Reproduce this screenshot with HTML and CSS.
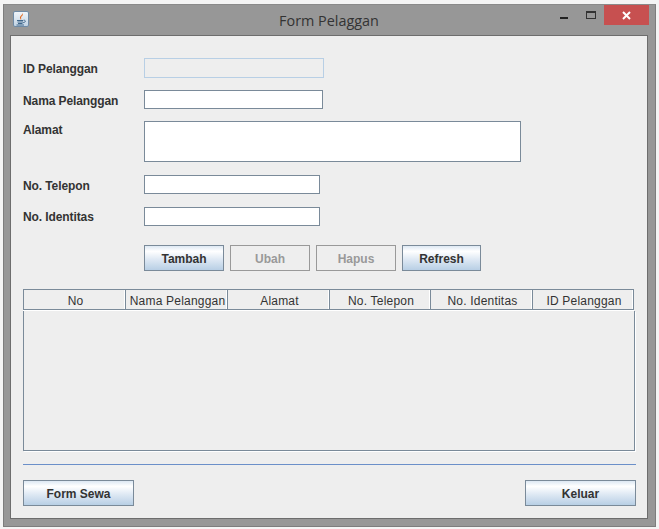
FILE: index.html
```html
<!DOCTYPE html>
<html lang="id">
<head>
  <meta charset="UTF-8" />
  <meta name="viewport" content="width=device-width, initial-scale=1" />
  <title>Form Pelaggan</title>
  <link rel="stylesheet" href="styles.css">
</head>
<body>
  <div class="window">
    <div class="titlebar">
      <svg class="app-icon" width="16" height="16" viewBox="0 0 16 16">
        <defs>
          <linearGradient id="iconBg" x1="0" y1="0" x2="0" y2="1">
            <stop offset="0" stop-color="#f2f6fa"/>
            <stop offset="1" stop-color="#bfd2e4"/>
          </linearGradient>
        </defs>
        <rect x="0.5" y="0.5" width="15" height="15" rx="1.5" fill="url(#iconBg)" stroke="#6f8aa5"/>
        <path d="M9 2C10 4 6.5 5 7 7C7.2 7.8 7.8 8.3 8 9C8.6 8 7.8 7 8.2 6C8.6 5 11 4.5 9 2Z" fill="#e2661a"/>
        <path d="M4 9.5H10M4.5 11H10M5 12.5H9.5M3.5 14H11" stroke="#41688c" stroke-width="1"/>
        <path d="M10.5 9.2C13 9 13 11.4 10.2 11.6" fill="none" stroke="#41688c" stroke-width="1"/>
      </svg>
      <div class="title">Form Pelaggan</div>
      <div class="controls">
        <span class="ctl-min"></span>
        <span class="ctl-max"></span>
        <span class="ctl-close">
          <svg width="9" height="9" viewBox="0 0 9 9"><path d="M1 1L8 8M8 1L1 8" stroke="#fff" stroke-width="2"/></svg>
        </span>
      </div>
    </div>

    <div class="content">
      <form class="fields">
        <div class="row row-id">
          <label>ID Pelanggan</label>
          <input class="input input-id" type="text" disabled />
        </div>
        <div class="row row-nama">
          <label>Nama Pelanggan</label>
          <input class="input input-nama" type="text" />
        </div>
        <div class="row row-alamat">
          <label>Alamat</label>
          <div class="input input-alamat"></div>
        </div>
        <div class="row row-telp">
          <label>No. Telepon</label>
          <input class="input input-short" type="text" />
        </div>
        <div class="row row-ident">
          <label>No. Identitas</label>
          <input class="input input-short" type="text" />
        </div>
      </form>

      <div class="actions">
        <button class="btn btn-80" type="button">Tambah</button>
        <button class="btn btn-80" type="button" disabled>Ubah</button>
        <button class="btn btn-80" type="button" disabled>Hapus</button>
        <button class="btn btn-79" type="button">Refresh</button>
      </div>

      <div class="table">
        <div class="thead">
          <div class="th">No</div>
          <div class="th">Nama Pelanggan</div>
          <div class="th">Alamat</div>
          <div class="th">No. Telepon</div>
          <div class="th">No. Identitas</div>
          <div class="th">ID Pelanggan</div>
        </div>
        <div class="tbody"></div>
      </div>

      <div class="separator"></div>

      <div class="footer">
        <button class="btn btn-wide" type="button">Form Sewa</button>
        <button class="btn btn-wide" type="button">Keluar</button>
      </div>
    </div>
  </div>
</body>
</html>
```

FILE: styles.css
```css
body {
  margin: 0;
  padding: 4px 3px 2px;
  background: #f4f4f4;
  font-family: "Liberation Sans", Arial, sans-serif;
}
.window {
  width: 653px;
  height: 523px;
  box-sizing: border-box;
  background: #979797;
  border: 1px solid #7d7d7d;
  border-top-color: #8a8a8a;
  padding: 0 7px 7px 6px;
  display: flex;
  flex-direction: column;
}
.titlebar {
  height: 30px;
  display: flex;
  align-items: flex-start;
  position: relative;
}
.app-icon {
  margin: 6px 0 0 3px;
}
.title {
  position: absolute;
  left: 0;
  right: 0;
  top: 6px;
  text-align: center;
  font-family: "Open Sans", sans-serif;
  font-size: 14.4px;
  line-height: 19px;
  color: #333;
}
.controls {
  display: flex;
  align-items: flex-start;
  position: absolute;
  right: -1px;
  top: 0;
}
.ctl-min {
  width: 8px;
  height: 2px;
  background: #222;
  margin: 12px 18px 0 0;
}
.ctl-max {
  width: 8px;
  height: 5px;
  border: solid #333;
  border-width: 2px 1px 1px;
  margin: 6px 8px 0 0;
}
.ctl-close {
  width: 45px;
  height: 20px;
  background: #c75050;
  display: flex;
  align-items: center;
  justify-content: center;
}
.content {
  flex: 1;
  background: #eeeeee;
  border: 1px solid #6d6d6d;
  padding: 0 12px;
}

.row {
  display: flex;
}
.row label {
  width: 121px;
  flex: none;
  font-size: 12px;
  font-weight: bold;
  line-height: 14px;
  letter-spacing: -0.1px;
  color: #333;
}
.row-id { margin-top: 22px; height: 20px; align-items: center; }
.row-nama { margin-top: 12px; height: 19px; align-items: center; }
.row-alamat { margin-top: 12px; height: 41px; }
.row-telp { margin-top: 13px; height: 19px; align-items: center; }
.row-ident { margin-top: 13px; height: 19px; align-items: center; }
.row-alamat label { margin-top: 2px; }
.row-id label,
.row-nama label,
.row-telp label { padding-top: 2px; }

.input {
  box-sizing: border-box;
  margin: 0;
  padding: 0;
  background: #fff;
  border: 1px solid #7a8a99;
  border-radius: 0;
}
.input-id {
  width: 180px;
  height: 20px;
  background: #eeeeee;
  border-color: #b8cfe5;
}
.input-nama {
  width: 179px;
  height: 19px;
}
.input-alamat {
  width: 377px;
  height: 41px;
}
.input-short {
  width: 176px;
  height: 19px;
}

.btn {
  box-sizing: border-box;
  height: 26px;
  margin: 0;
  padding: 2px 0 0;
  font-family: "Liberation Sans", Arial, sans-serif;
  font-size: 12px;
  font-weight: bold;
  color: #333;
  border: 1px solid #7a8a99;
  border-radius: 0;
  background: linear-gradient(#dde8f3 0%, #ffffff 22%, #dfe9f4 55%, #b8cfe5 100%);
}
.btn:disabled {
  color: #999;
  background: #eeeeee;
  border-color: #999;
}
.btn-80 { width: 80px; }
.btn-79 { width: 79px; }
.btn-wide { width: 111px; }

.actions {
  display: flex;
  gap: 6px;
  margin: 19px 0 0 121px;
}

.table {
  margin-top: 18px;
  width: 612px;
  height: 162px;
  display: flex;
  flex-direction: column;
}
.thead {
  display: grid;
  grid-template-columns: 102px 102px 102px 101px 102px 101px;
  width: 611px;
  height: 21px;
  box-sizing: border-box;
  border: solid #7a8a99;
  border-width: 1px 0 1px 1px;
  box-shadow: 0 1px 0 #fff;
}
.th {
  border-right: 1px solid #7a8a99;
  box-shadow: inset -1px 0 0 #fff;
  padding: 1px 0 0 2px;
  font-size: 12px;
  line-height: 20px;
  letter-spacing: 0.2px;
  text-align: center;
  color: #333;
  white-space: nowrap;
  overflow: hidden;
}
.tbody {
  flex: 1;
  margin-top: 1px;
  background: #eeeeee;
  border: solid #7a8a99;
  border-width: 0 1px 1px;
  box-shadow: 1px 1px 0 #fff;
}

.separator {
  margin-top: 13px;
  width: 613px;
  height: 1px;
  background: #6b8fc9;
}
.footer {
  display: flex;
  justify-content: space-between;
  width: 613px;
  margin-top: 15px;
}
```
